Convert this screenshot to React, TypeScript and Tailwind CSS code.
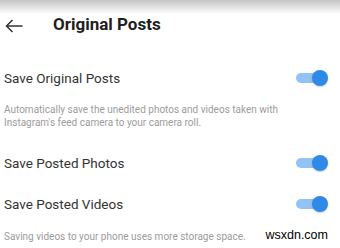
import React from 'react';

const Toggle = () => (
  <div className="relative w-[32px] h-[16px] shrink-0">
    <div className="absolute left-0 top-[3px] w-[24px] h-[10px] rounded-full bg-[#93c3f3]" />
    <div className="absolute right-0 top-0 w-[16px] h-[16px] rounded-full bg-[#2f89e6] shadow-[0_1px_2px_rgba(0,0,0,0.2)]" />
  </div>
);

const Row = ({ label, className }: { label: string; className: string }) => (
  <div className={`flex items-center justify-between h-[28px] pl-[4px] pr-[12px] ${className}`}>
    <span className="text-[13.5px] text-[#333]">{label}</span>
    <Toggle />
  </div>
);

const App = () => {
  return (
    <div className="w-[340px] h-[248px] bg-white overflow-hidden font-['Roboto','Liberation_Sans',sans-serif]">
      {/* top bar */}
      <div className="flex items-center h-[50px] bg-gradient-to-b from-[#c4c4c4] via-white via-[28%] to-white">
        <svg width="18" height="14" viewBox="0 0 18 14" className="ml-[5px] mt-[1px]" fill="none" stroke="#333" strokeWidth="1.5">
          <path d="M17.5 7H1.5M7.5 1L1.5 7l6 6" />
        </svg>
        <h1 className="ml-[30px] text-[17px] font-bold text-[#1e1e1e]">Original Posts</h1>
      </div>

      <Row label="Save Original Posts" className="mt-[14px]" />
      <p className="mt-[11px] pl-[4px] pr-[40px] text-[10px] leading-[13px] text-[#9c9c9c]">
        Automatically save the unedited photos and videos taken with Instagram's feed camera to your camera roll.
      </p>

      <Row label="Save Posted Photos" className="mt-[20px]" />
      <Row label="Save Posted Videos" className="mt-[13px]" />

      <div className="mt-[11px] flex items-center pl-[4px] pr-[12px]">
        <p className="text-[10px] leading-[13px] text-[#9c9c9c]">Saving videos to your phone uses more storage space.</p>
        <span className="ml-auto text-[12.5px] text-black font-['Liberation_Sans',sans-serif] -mt-[3px]">wsxdn.com</span>
      </div>
    </div>
  );
};

export default App;
